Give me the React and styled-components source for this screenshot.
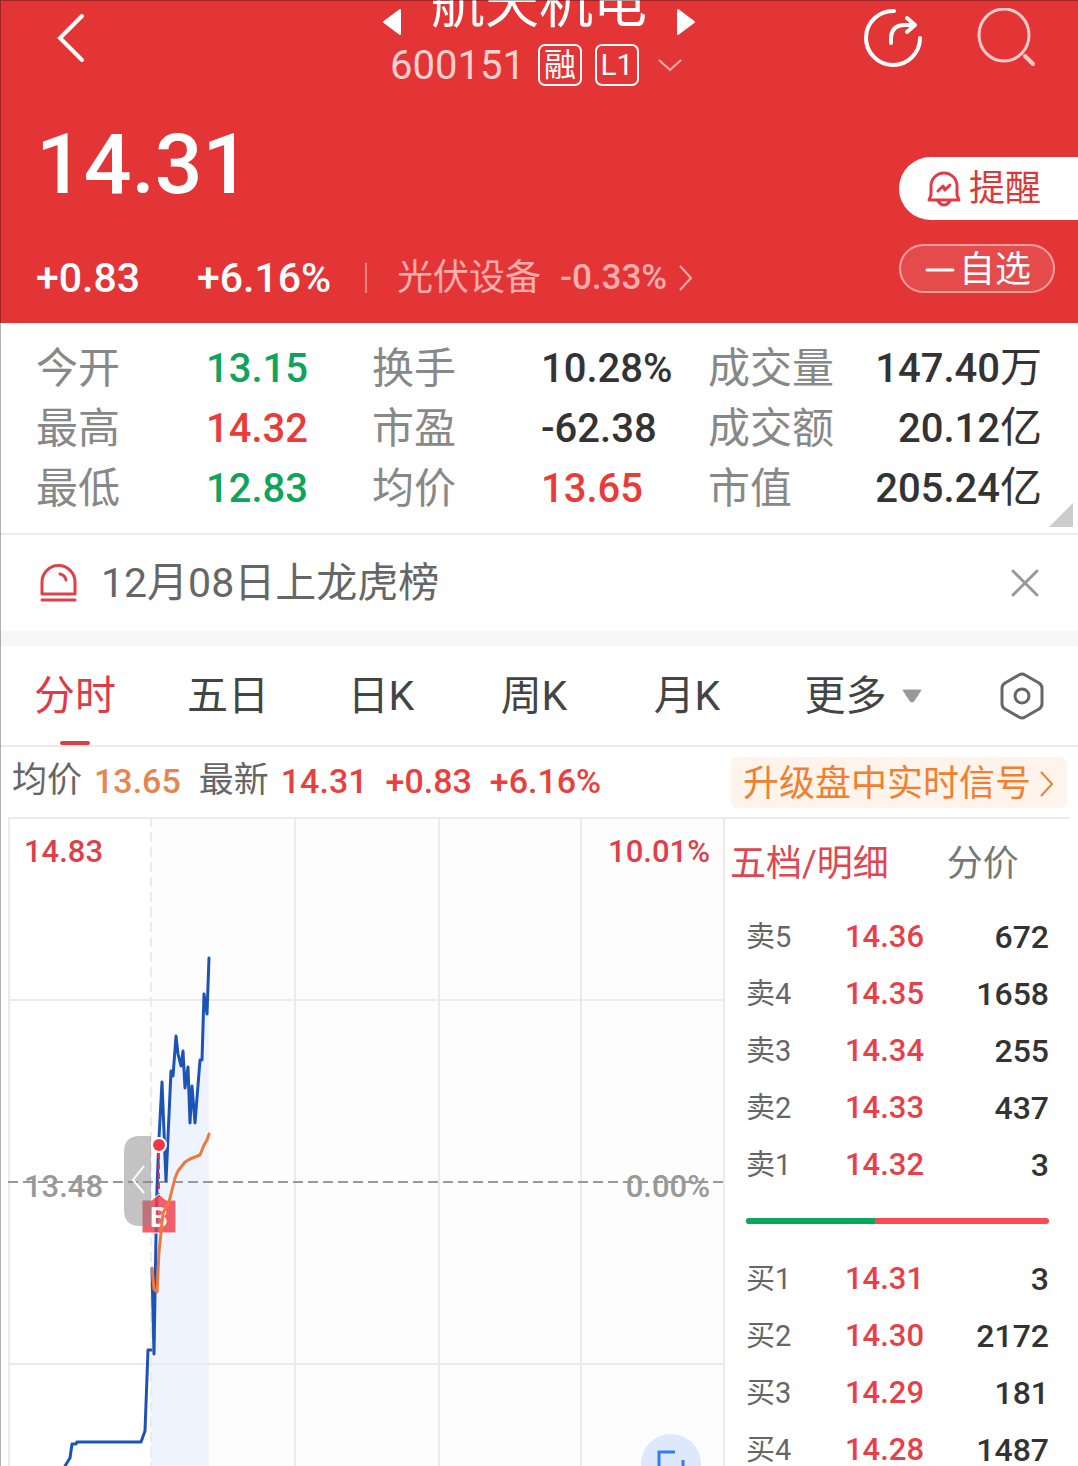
import { useState } from "react";
import styled, { createGlobalStyle } from "styled-components";

const GlobalStyle = createGlobalStyle`
  * {
    box-sizing: border-box;
  }
  body {
    margin: 0;
    background-color: #fff;
    color: #333;
    font-family: Roboto, "Noto Sans CJK SC", sans-serif;
  }
  button {
    border: none;
    background: none;
    padding: 0;
    margin: 0;
    color: inherit;
    font: inherit;
    cursor: pointer;
  }
  svg {
    display: block;
  }
`

const Page = styled.div`
  position: relative;
  height: 100vh;
  overflow: hidden;
  display: flex;
  flex-direction: column;
  &::after {
    content: "";
    position: absolute;
    inset: 0;
    border-top: 1px solid rgba(0, 0, 0, 0.3);
    border-left: 1px solid rgba(0, 0, 0, 0.3);
    pointer-events: none;
  }
`

/* ---------- header ---------- */
const Header = styled.header`
  flex: none;
  background-color: #e33536;
  color: #fff;
`
const TopBar = styled.div`
  display: grid;
  grid-template-columns: 1fr auto 1fr;
  height: 87px;
`
const TopSide = styled.div`
  display: flex;
  align-items: flex-start;
  justify-content: ${(p) => (p.$end ? 'flex-end' : 'flex-start')};
  gap: 53px;
  padding: 8px 42px 0px 56px;
`
const TitleBox = styled.div`
  display: flex;
  flex-direction: column;
  align-items: center;
`
const TitleRow = styled.div`
  display: flex;
  align-items: center;
  gap: 29px;
  height: 43px;
`
const Title = styled.h1`
  align-self: flex-start;
  margin: -22px 0px 0px 0px;
  font-size: 54px;
  line-height: 54px;
  font-weight: 400;
`
const CodeRow = styled.div`
  display: flex;
  align-items: center;
  gap: 13px;
  height: 44px;
  font-size: 40px;
  color: #ffd0d0;
`
const Badge = styled.span`
  display: flex;
  align-items: center;
  justify-content: center;
  width: 44px;
  height: 42px;
  border: 2px solid #fff;
  border-radius: 7px;
  color: #fff;
  font-size: ${(p) => (p.$latin ? 30 : 32)}px;
  line-height: 36px;
`
const Summary = styled.div`
  display: flex;
  justify-content: space-between;
  padding: 0px 0px 21px 36px;
`
const Price = styled.p`
  margin: 35px 0px 46px 0px;
  font-size: 84px;
  line-height: 86px;
  font-weight: 500;
`
const ChangeRow = styled.div`
  display: flex;
  align-items: center;
  height: 48px;
`
const Change = styled.span`
  width: ${(p) => p.$width}px;
  font-size: 41px;
  font-weight: 500;
`
const Sector = styled.a`
  display: flex;
  align-items: center;
  gap: 12px;
  height: 30px;
  padding-left: 30px;
  border-left: 2px solid #ee8182;
  color: #ffadad;
  font-size: 36px;
  line-height: 40px;
  text-decoration: none;
  .rate {
    margin-left: 7px;
    font-size: 35px;
    font-weight: 500;
  }
`
const Actions = styled.div`
  display: flex;
  flex-direction: column;
  gap: 24px;
  width: 179px;
  padding-top: 70px;
`
const AlertButton = styled.button`
  display: flex;
  align-items: center;
  gap: 8px;
  height: 63px;
  padding-left: 28px;
  border-radius: 32px 0px 0px 32px;
  background-color: #fff;
  color: #d8393c;
  font-size: 36px;
  line-height: 40px;
`
const WatchButton = styled.button`
  display: flex;
  align-items: center;
  justify-content: center;
  gap: 4px;
  width: 156px;
  height: 49px;
  padding: 2px 0px 0px 2px;
  border: 2px solid #f4a0a0;
  border-radius: 25px;
  background-color: #e64b4c;
  font-size: 36px;
  line-height: 40px;
`

/* ---------- quote figures ---------- */
const Stats = styled.section`
  flex: none;
  position: relative;
  padding: 16px 36px 14px 36px;
  border-bottom: 2px solid #ececec;
`
const StatGrid = styled.dl`
  display: grid;
  grid-template-columns: 170fr 166fr 169fr 167fr 334fr;
  grid-auto-rows: 60px;
  align-items: center;
  margin: 0;
`
// the third pair of a row shares one wide cell
const StatPair = styled.div`
  display: contents;
  &:nth-child(3n) {
    display: flex;
    justify-content: space-between;
  }
`
const StatLabel = styled.dt`
  font-size: 42px;
  line-height: 60px;
  color: #888;
`
const StatValue = styled.dd`
  margin: 0;
  font-size: 40px;
  line-height: 60px;
  font-weight: 500;
  color: ${(p) => p.$color || '#333'};
  text-align: ${(p) => (p.$right ? 'right' : 'left')};
  .unit {
    font-size: 42px;
    line-height: 40px;
    font-weight: 400;
  }
`
const Corner = styled.svg`
  position: absolute;
  right: 5px;
  bottom: 6px;
`

const Notice = styled.section`
  flex: none;
  display: flex;
  align-items: center;
  gap: 24px;
  height: 96px;
  padding: 0px 39px 0px 40px;
  font-size: 41px;
  line-height: 60px;
  color: #666;
  .text {
    flex: 1;
  }
`
const Band = styled.div`
  flex: none;
  height: 15px;
  background-color: #f7f7f7;
`

/* ---------- period tabs ---------- */
const Tabs = styled.nav`
  flex: none;
  display: grid;
  grid-template-columns: repeat(5, 153fr) 200fr 113fr;
  height: 101px;
  border-bottom: 2px solid #ebebeb;
`
const Tab = styled.button`
  position: relative;
  display: flex;
  align-items: center;
  justify-content: center;
  gap: 14px;
  padding-right: 3px;
  font-size: 41px;
  line-height: 60px;
  color: #444;

  &:last-child {
    padding-right: 0px;
  }
  &.active {
    color: #e03a48;
  }
  &.active::after {
    content: "";
    position: absolute;
    bottom: 0px;
    width: 30px;
    height: 4px;
    border-radius: 2px;
    background-color: #dc3d4a;
  }
`

const InfoBar = styled.div`
  flex: none;
  display: flex;
  align-items: center;
  justify-content: space-between;
  height: 70px;
  padding: 0px 11px 0px 12px;
`
const Info = styled.div`
  display: flex;
  align-items: center;
  gap: 18px;
  font-size: 34px;
  line-height: 40px;
  padding-bottom: 2px;
  font-weight: 500;
  color: #e9403d;
  .label {
    margin-right: -6px;
    font-size: 35px;
    font-weight: 400;
    color: #666;
  }
  .avg {
    color: #e58550;
  }
`
const Upgrade = styled.button`
  display: flex;
  align-items: center;
  gap: 9px;
  height: 51px;
  padding: 3px 13px 0px 12px;
  border-radius: 6px;
  background-color: #fff4ec;
  color: #f08030;
  font-size: 36px;
  line-height: 48px;
`

/* ---------- chart and order book ---------- */
const Main = styled.main`
  flex: 1;
  min-height: 0;
  display: grid;
  grid-template-columns: 717fr 345fr;
  grid-template-rows: minmax(0, 1fr);
  margin: 0px 8px;
  border-top: 2px solid #ebebeb;
`
const ChartBox = styled.div`
  position: relative;
  overflow: hidden;
`
const Chart = styled.svg`
  width: 100%;
  text {
    font-family: Roboto, "Noto Sans CJK SC", sans-serif;
    font-size: 31px;
    font-weight: 500;
  }
  .mark {
    font-size: 28px;
    font-weight: 700;
  }
`
const FloatButton = styled.button`
  position: absolute;
  right: 24px;
  bottom: -28px;
  width: 60px;
  height: 60px;
  border-radius: 50%;
  background-color: #dde8fc;
`
const BookTabs = styled.div`
  display: flex;
  align-items: center;
  gap: 58px;
  height: 89px;
  padding-left: 5px;
  font-size: 36px;
  line-height: 40px;
  color: #777;
  .active {
    color: #e04650;
  }
`
const BookTable = styled.table`
  width: calc(100% - 42px);
  margin-left: 21px;
  border-collapse: collapse;
  table-layout: fixed;
  font-size: 32px;
  font-weight: 500;
  th {
    width: 99px;
    padding: 0;
    font-size: 29px;
    line-height: 40px;
    font-weight: 400;
    text-align: left;
    color: #666;
  }
  td {
    height: 57px;
    padding: 0;
    line-height: 40px;
  }
  .price {
    font-size: 31px;
    color: #e8404a;
  }
  .volume {
    text-align: right;
  }
`
const Ratio = styled.div`
  display: grid;
  grid-template-columns: 129fr 174fr;
  height: 6px;
  margin: 25px 21px 26px 21px;
  border-radius: 3px;
  overflow: hidden;
  background-color: #fb4b50;
  .buy {
    background-color: #08a95c;
  }
`

const GREEN = '#0fa45c';
const RED = '#e93c38';

const stats = [
  { label: '今开', value: '13.15', color: GREEN },
  { label: '换手', value: '10.28%' },
  { label: '成交量', value: '147.40', unit: '万' },
  { label: '最高', value: '14.32', color: RED },
  { label: '市盈', value: '-62.38' },
  { label: '成交额', value: '20.12', unit: '亿' },
  { label: '最低', value: '12.83', color: GREEN },
  { label: '均价', value: '13.65', color: RED },
  { label: '市值', value: '205.24', unit: '亿' },
];

const periods = ['分时', '五日', '日K', '周K', '月K'];

const sells = [
  ['卖5', '14.36', '672'],
  ['卖4', '14.35', '1658'],
  ['卖3', '14.34', '255'],
  ['卖2', '14.33', '437'],
  ['卖1', '14.32', '3'],
];
const buys = [
  ['买1', '14.31', '3'],
  ['买2', '14.30', '2172'],
  ['买3', '14.29', '181'],
  ['买4', '14.28', '1487'],
];

const preOpen = '57,649 62,641 64,627 68,627 69,625 133,625 137,614 140,533 143,533';
const priceLine = '144,452 146,537 148,418 149,371 151,321 154,265 158,364 163,254 165,259 168,219 170,237 173,249 175,234 177,271 180,250 182,306 184,269 187,306 192,243 194,243 196,177 199,197 201,141';
const avgLine = '144,451 146,472 149,475 151,435 155,396 161,385 167,361 170,354 177,345 182,342 192,338 196,328 199,323 201,317';

const Book = ({ rows, label }) => (
  <BookTable aria-label={label}>
    <tbody>
      {rows.map(([name, price, volume]) => (
        <tr key={name}>
          <th scope="row">{name}</th>
          <td className="price">{price}</td>
          <td className="volume">{volume}</td>
        </tr>
      ))}
    </tbody>
  </BookTable>
)

const MinuteChart = () => (
  <Chart viewBox="0 2 717 649" fill="none">
    <rect x="143" y="2" width="573" height="660" fill="#fdfdfd" />
    <polygon points={`143,660 143,533 ${priceLine} 201,660`} fill="#eef3fd" />
    <g stroke="#ebebeb" strokeWidth="2">
      <path d="M1 0V660M287 0V660M431 0V660M573 0V660M716 0V660" />
      <path d="M1 183H716M1 547H716" />
      <path d="M143 0V660" strokeDasharray="10 5" />
    </g>
    <path d="M0 365H716" stroke="#999" strokeWidth="2" strokeDasharray="10 5" />
    <text x="16" y="45" fill="#e03f49">14.83</text>
    <text x="702" y="45" fill="#e03f49" textAnchor="end">10.01%</text>
    <text x="16" y="380" fill="#999">13.48</text>
    <text x="702" y="380" fill="#999" textAnchor="end">0.00%</text>
    <g stroke="#1d53b5" strokeWidth="3" strokeLinejoin="round" strokeLinecap="round">
      <polyline points={preOpen} />
      <polyline points={priceLine} />
    </g>
    <path d="M151 336V380" stroke="#e23a55" strokeWidth="2" strokeDasharray="6 4" />
    <path d="M134 383H144L151 377L158 383H168V416H134Z" fill="#f23c4c" fillOpacity="0.82" stroke="#fff" />
    <text className="mark" x="151" y="410" fill="#fff" textAnchor="middle">B</text>
    <polyline points={avgLine} stroke="#ee7842" strokeWidth="3" strokeLinejoin="round" strokeLinecap="round" />
    <circle cx="151" cy="328" r="7" fill="#f23645" stroke="#fff" strokeWidth="2" />
    <path d="M143 319H132Q116 319 116 335V393Q116 409 132 409H143Z" fill="#888" fillOpacity="0.5" />
    <path d="M136 349L125 363L136 376" stroke="#fff" strokeWidth="2" />
  </Chart>
)

const App = () => {
  const [period, setPeriod] = useState('分时');
  const [notice, setNotice] = useState(true);
  return (
    <Page>
      <GlobalStyle />
      <Header>
        <TopBar>
          <TopSide>
            <button aria-label="返回">
              <svg width="30" height="60" viewBox="0 0 30 60" fill="none" stroke="#fff" strokeWidth="4" strokeLinecap="round">
                <path d="M26 8L4 30L26 52" />
              </svg>
            </button>
          </TopSide>
          <TitleBox>
            <TitleRow>
              <button aria-label="上一只">
                <svg width="19" height="26" viewBox="0 0 19 26"><path d="M17 1L1 13L17 25Z" fill="#fff" stroke="#fff" strokeWidth="2" strokeLinejoin="round" /></svg>
              </button>
              <Title>航天机电</Title>
              <button aria-label="下一只">
                <svg width="19" height="26" viewBox="0 0 19 26"><path d="M2 1L18 13L2 25Z" fill="#fff" stroke="#fff" strokeWidth="2" strokeLinejoin="round" /></svg>
              </button>
            </TitleRow>
            <CodeRow>
              <span>600151</span>
              <Badge>融</Badge>
              <Badge $latin>L1</Badge>
              <svg width="36" height="14" viewBox="0 0 36 14" fill="none" stroke="#ffb0b0" strokeWidth="2"><path d="M7 2L18 12L29 2" /></svg>
            </CodeRow>
          </TitleBox>
          <TopSide $end>
            <button aria-label="分享">
              <svg width="60" height="60" viewBox="0 0 60 60" fill="none" stroke="#fff" strokeWidth="4" strokeLinecap="round" strokeLinejoin="round">
                <path d="M31 3A27 27 0 1 0 57 30" />
                <path d="M28 35V31Q28 17 42 17H51" />
                <path d="M44 10L52 17L44 24" />
              </svg>
            </button>
            <button aria-label="搜索">
              <svg width="60" height="60" viewBox="0 0 60 60" fill="none" stroke="#ffcccc" strokeWidth="4" strokeLinecap="round">
                <ellipse cx="28" cy="27" rx="25" ry="26" strokeWidth="3" />
                <path d="M49 48L57 56" />
              </svg>
            </button>
          </TopSide>
        </TopBar>
        <Summary>
          <div>
            <Price>14.31</Price>
            <ChangeRow>
              <Change $width={161}>+0.83</Change>
              <Change $width={168}>+6.16%</Change>
              <Sector href="#sector">
                光伏设备
                <span className="rate">-0.33%</span>
                <svg width="14" height="26" viewBox="0 0 14 26" fill="none" stroke="#ffadad" strokeWidth="2"><path d="M1 1L12 13L1 25" /></svg>
              </Sector>
            </ChangeRow>
          </div>
          <Actions>
            <AlertButton>
              <svg width="34" height="36" viewBox="0 0 34 36" fill="none" stroke="#e03c48" strokeWidth="3" strokeLinecap="round" strokeLinejoin="round">
                <path d="M4 24V15A13 13 0 0 1 30 15V24L32 29H2Z" />
                <path d="M11 30Q17 38 23 30" />
                <path d="M11 20L16 15L18 19L23 14" />
              </svg>
              提醒
            </AlertButton>
            <WatchButton>
              <svg width="30" height="4" viewBox="0 0 30 4"><path d="M2 2H28" stroke="#fff" strokeWidth="3" strokeLinecap="round" /></svg>
              自选
            </WatchButton>
          </Actions>
        </Summary>
      </Header>

      <Stats>
        <StatGrid>
          {stats.map((s) => (
            <StatPair key={s.label}>
              <StatLabel>{s.label}</StatLabel>
              <StatValue $color={s.color} $right={!!s.unit}>
                {s.value}
                {s.unit && <span className="unit">{s.unit}</span>}
              </StatValue>
            </StatPair>
          ))}
        </StatGrid>
        <Corner width="24" height="24" viewBox="0 0 24 24"><path d="M24 0V24H0Z" fill="#ccc" /></Corner>
      </Stats>

      {notice && (
        <Notice>
          <svg width="37" height="38" viewBox="0 0 37 38" fill="none" stroke="#e04048" strokeWidth="3" strokeLinecap="round">
            <path d="M2 30V18A16 16 0 0 1 35 18V30Z" strokeLinejoin="round" />
            <path d="M2 36H35M20 10Q25 11 26 16" />
          </svg>
          <span className="text">12月08日上龙虎榜</span>
          <button aria-label="关闭" onClick={() => { setNotice(false) }}>
            <svg width="28" height="28" viewBox="0 0 28 28" fill="none" stroke="#999" strokeWidth="3" strokeLinecap="round"><path d="M2 2L26 26M26 2L2 26" /></svg>
          </button>
        </Notice>
      )}
      <Band />

      <Tabs>
        {periods.map((p) => (
          <Tab key={p} className={period == p ? 'active' : null} onClick={() => { setPeriod(p) }}>{p}</Tab>
        ))}
        <Tab>
          更多
          <svg width="22" height="14" viewBox="0 0 22 14"><path d="M2 1H20L13 12Q11 14 9 12Z" fill="#999" stroke="#999" strokeLinejoin="round" /></svg>
        </Tab>
        <Tab aria-label="设置">
          <svg width="44" height="48" viewBox="0 0 44 48" fill="none" stroke="#666" strokeWidth="3" strokeLinejoin="round">
            <path d="M19 3Q22 1 25 3L39 11Q42 13 42 16V32Q42 35 39 37L25 45Q22 47 19 45L5 37Q2 35 2 32V16Q2 13 5 11Z" />
            <circle cx="22" cy="24" r="7" />
          </svg>
        </Tab>
      </Tabs>

      <InfoBar>
        <Info>
          <span className="label">均价</span>
          <span className="avg">13.65</span>
          <span className="label">最新</span>
          <span>14.31</span>
          <span>+0.83</span>
          <span>+6.16%</span>
        </Info>
        <Upgrade>
          升级盘中实时信号
          <svg width="14" height="26" viewBox="0 0 14 26" fill="none" stroke="#f08030" strokeWidth="2"><path d="M1 1L12 13L1 25" /></svg>
        </Upgrade>
      </InfoBar>

      <Main>
        <ChartBox>
          <MinuteChart />
          <FloatButton aria-label="画线">
            <svg width="60" height="60" viewBox="0 0 60 60" fill="none" stroke="#3b7bf0" strokeWidth="3">
              <path d="M34 18H18V42H42V26" />
            </svg>
          </FloatButton>
        </ChartBox>
        <div>
          <BookTabs>
            <button className="active">五档/明细</button>
            <button>分价</button>
          </BookTabs>
          <Book rows={sells} label="卖盘" />
          <Ratio>
            <span className="buy" />
          </Ratio>
          <Book rows={buys} label="买盘" />
        </div>
      </Main>
    </Page>
  )
}

export default App;
